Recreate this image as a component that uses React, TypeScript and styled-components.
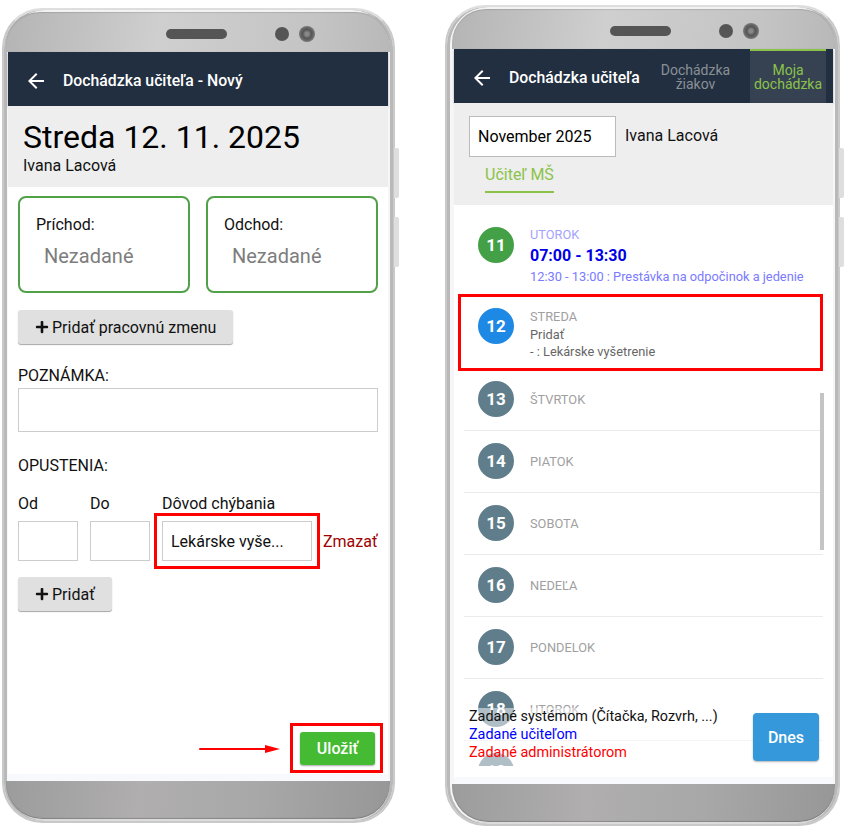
import styled, { createGlobalStyle } from "styled-components";
import { FaPlus } from "react-icons/fa";
import { MdArrowBack } from "react-icons/md";

const GlobalStyle = createGlobalStyle`
  html, body {
    margin: 0;
    padding: 0;
    background: #fff;
    font-family: Roboto, "Liberation Sans", sans-serif;
  }
  * { box-sizing: border-box; }
`;

const days = [
  { num: 13, name: "ŠTVRTOK" },
  { num: 14, name: "PIATOK" },
  { num: 15, name: "SOBOTA" },
  { num: 16, name: "NEDEĽA" },
  { num: 17, name: "PONDELOK" },
  { num: 18, name: "UTOROK" },
  { num: 19, name: "STREDA" },
];

const App = () => {
  return (
    <>
      <GlobalStyle />
      <Page>
        <Phone $width={393} $height={815} $top={8} $pad={4}>
          <SideKey $top={138} />
          <SideKey $top={207} />
          <TopBezel>
            <Speaker $offset={160} />
            <Sensor />
            <Camera />
          </TopBezel>
          <Screen>
            <Header>
              <BackIcon />
              <HeaderTitle>Dochádzka učiteľa - Nový</HeaderTitle>
            </Header>
            <DayHead>
              <DayTitle>Streda 12. 11. 2025</DayTitle>
              <DayPerson>Ivana Lacová</DayPerson>
            </DayHead>
            <Form>
              <TimeCards>
                <TimeCard>
                  <TimeLabel>Príchod:</TimeLabel>
                  <TimeValue>Nezadané</TimeValue>
                </TimeCard>
                <TimeCard>
                  <TimeLabel>Odchod:</TimeLabel>
                  <TimeValue>Nezadané</TimeValue>
                </TimeCard>
              </TimeCards>
              <GrayButton>
                <FaPlus size={14} />
                Pridať pracovnú zmenu
              </GrayButton>
              <SectionLabel>POZNÁMKA:</SectionLabel>
              <NoteBox />
              <AbsenceLabel>OPUSTENIA:</AbsenceLabel>
              <AbsenceGrid>
                <span>Od</span>
                <span>Do</span>
                <span>Dôvod chýbania</span>
                <span />
                <FieldBox />
                <FieldBox />
                <ReasonField>
                  Lekárske vyše...
                  <Highlight $left={-9} $top={-9} $width={166} $height={56} />
                </ReasonField>
                <DeleteLink>Zmazať</DeleteLink>
              </AbsenceGrid>
              <AddButton>
                <FaPlus size={14} />
                Pridať
              </AddButton>
              <SaveRow>
                <ArrowMark width="82" height="10" viewBox="0 0 82 10">
                  <path d="M1 5H68" stroke="#f00" strokeWidth="2" strokeLinecap="round" />
                  <path d="M66 1L81 5L66 9Z" fill="#f00" />
                </ArrowMark>
                <SaveButton>
                  Uložiť
                  <Highlight $left={-10} $top={-9} $width={93} $height={50} />
                </SaveButton>
              </SaveRow>
            </Form>
            <BottomBand />
          </Screen>
          <BottomBezel />
        </Phone>

        <Phone $width={395} $height={821} $top={5} $pad={7}>
          <SideKey $top={141} />
          <SideKey $top={210} />
          <TopBezel>
            <Speaker $offset={158} />
            <Sensor />
            <Camera />
          </TopBezel>
          <Screen>
            <Header>
              <BackIcon />
              <HeaderTitle>Dochádzka učiteľa</HeaderTitle>
              <Tabs>
                <Tab>Dochádzka žiakov</Tab>
                <Tab $active>Moja dochádzka</Tab>
              </Tabs>
            </Header>
            <MonthHead>
              <MonthRow>
                <MonthField>November 2025</MonthField>
                <MonthPerson>Ivana Lacová</MonthPerson>
              </MonthRow>
              <RoleTab>Učiteľ MŠ</RoleTab>
            </MonthHead>
            <ListArea>
              <DayRow $height={81} $plain>
                <DayCircle $color="#43a047">11</DayCircle>
                <DayInfo $top={0}>
                  <DayName $color="#a3a3ff">UTOROK</DayName>
                  <ShiftTime>07:00 - 13:30</ShiftTime>
                  <BreakText>12:30 - 13:00 : Prestávka na odpočinok a jedenie</BreakText>
                </DayInfo>
              </DayRow>
              <DayRow $height={73} $plain>
                <DayCircle $color="#1e88e5">12</DayCircle>
                <DayInfo $top={1}>
                  <DayName>STREDA</DayName>
                  <DayNote>Pridať</DayNote>
                  <DayNote>- : Lekárske vyšetrenie</DayNote>
                </DayInfo>
                <Highlight $left={-6} $top={-2} $width={365} $height={77} />
              </DayRow>
              {days.map((day) => (
                <DayRow key={day.num} $height={62}>
                  <DayCircle $color="#607d8b">{day.num}</DayCircle>
                  <DayInfo $top={11}>
                    <DayName>{day.name}</DayName>
                  </DayInfo>
                </DayRow>
              ))}
              <ScrollThumb />
              <LegendBar>
                <div>
                  <LegendItem $color="#111">Zadané systémom (Čítačka, Rozvrh, ...)</LegendItem>
                  <LegendItem $color="#0000ff">Zadané učiteľom</LegendItem>
                  <LegendItem $color="#ff0000">Zadané administrátorom</LegendItem>
                </div>
                <TodayButton>Dnes</TodayButton>
              </LegendBar>
            </ListArea>
            <ListFoot />
            <BottomBand />
          </Screen>
          <BottomBezel />
        </Phone>
      </Page>
    </>
  );
};

export default App;

const Page = styled.div`
  display: flex;
  align-items: flex-start;
  gap: 50px;
  width: 849px;
  height: 829px;
  padding-left: 2px;
  overflow: hidden;
`;

const Phone = styled.div<{ $width: number; $height: number; $top: number; $pad: number }>`
  position: relative;
  display: flex;
  flex-direction: column;
  width: ${(p) => p.$width}px;
  height: ${(p) => p.$height}px;
  margin-top: ${(p) => p.$top}px;
  padding: 0 5px 0 ${(p) => p.$pad}px;
  background: #f6f6f9;
  border: 2px solid #c9c9c9;
  border-top-color: #dedede;
  border-radius: 40px;
  box-shadow: inset 3px 0 0 #b9b9b9, inset -3px 0 0 #b9b9b9, inset 0 -2px 0 #dcdcdc, inset 0 2px 0 #f2f2f2;
`;

const SideKey = styled.div<{ $top: number }>`
  position: absolute;
  right: -6px;
  top: ${(p) => p.$top}px;
  width: 5px;
  height: 50px;
  background: #dedede;
  border-radius: 0 2px 2px 0;
`;

const TopBezel = styled.div`
  display: flex;
  flex: none;
  align-items: center;
  height: 40px;
  margin: 2px -2px 0;
  padding-top: 4px;
  background: linear-gradient(100deg, #b4b4b4, #cfcfcf 40%, #c4c4c4 80%, #b8b8b8);
  border-radius: 34px 34px 0 0;
  box-shadow: inset 0 1px 1px rgba(0, 0, 0, 0.12);
`;

const Speaker = styled.div<{ $offset: number }>`
  width: 61px;
  height: 10px;
  margin-left: ${(p) => p.$offset}px;
  background: #555;
  border-radius: 5px;
`;

const Sensor = styled.div`
  width: 14px;
  height: 14px;
  margin-left: 48px;
  background: #555;
  border-radius: 50%;
`;

const Camera = styled.div`
  width: 16px;
  height: 16px;
  margin-left: 10px;
  background: radial-gradient(circle, #888 15%, #555 40%, #777 70%);
  border-radius: 50%;
`;

const Screen = styled.div`
  display: flex;
  flex: 1;
  flex-direction: column;
  min-height: 0;
  background: #fff;
`;

const BottomBezel = styled.div`
  flex: none;
  height: 38px;
  margin: 0 -2px 2px;
  background: linear-gradient(95deg, #9c9c9c, #b0aeae 35%, #a8a8a8 65%, #989797);
  border-radius: 0 0 36px 36px;
  box-shadow: inset 0 -1px 1px rgba(0, 0, 0, 0.2);
`;

const BottomBand = styled.div`
  flex: none;
  height: 7px;
  background: #f8f9fd;
`;

const Header = styled.div`
  display: flex;
  flex: none;
  align-items: center;
  height: 54px;
  padding: 3px 0 0 16px;
  background: #222f40;
  box-shadow: 0 1px 2px rgba(0, 0, 0, 0.3);
`;

const BackIcon = styled(MdArrowBack)`
  flex: none;
  width: 24px;
  height: 24px;
  color: #fff;
`;

const HeaderTitle = styled.div`
  margin-left: 15px;
  color: #fff;
  font-size: 15.8px;
  font-weight: 500;
  white-space: nowrap;
`;

const Tabs = styled.div`
  display: flex;
  align-self: stretch;
  gap: 9px;
  margin: -3px 7px 0 auto;
`;

const Tab = styled.div<{ $active?: boolean }>`
  display: flex;
  align-items: center;
  justify-content: center;
  width: ${(p) => (p.$active ? "76px" : "91px")};
  padding: 0 8px;
  color: ${(p) => (p.$active ? "#8bc34a" : "#8a8f96")};
  background: ${(p) => (p.$active ? "#364252" : "transparent")};
  border-top: 2px solid ${(p) => (p.$active ? "#8bc34a" : "transparent")};
  font-size: 14px;
  line-height: 14px;
  text-align: center;
`;

const DayHead = styled.div`
  flex: none;
  height: 81px;
  padding: 14px 15px 0;
  background: #eee;
`;

const DayTitle = styled.div`
  color: #000;
  font-size: 32px;
  line-height: 34px;
`;

const Person = styled.div`
  color: #111;
  font-size: 16px;
  line-height: 19px;
`;

const DayPerson = styled(Person)`
  margin-top: 2px;
`;

const MonthPerson = styled(Person)`
  margin-bottom: 2px;
`;

const Form = styled.div`
  display: flex;
  flex: 1;
  flex-direction: column;
  align-items: flex-start;
  min-height: 0;
  padding: 9px 10px 9px;
  color: #111;
  font-size: 16px;
`;

const TimeCards = styled.div`
  display: grid;
  grid-template-columns: 172px 172px;
  gap: 16px;
`;

const TimeCard = styled.div`
  height: 97px;
  padding: 17px 16px;
  border: 2px solid #51a149;
  border-radius: 8px;
`;

const TimeLabel = styled.div`
  line-height: 19px;
`;

const TimeValue = styled.div`
  margin-top: 10px;
  padding-left: 8px;
  color: #7d7d7d;
  font-size: 20px;
  line-height: 24px;
`;

const GrayButton = styled.button`
  display: flex;
  flex: none;
  align-items: center;
  gap: 3px;
  height: 34px;
  margin-top: 17px;
  padding: 0 17px;
  color: #111;
  background: #e0e0e0;
  border: 0;
  border-radius: 3px;
  box-shadow: 0 1px 1px rgba(0, 0, 0, 0.35);
  font-family: inherit;
  font-size: 16px;
`;

const AddButton = styled(GrayButton)`
  margin-top: 16px;
`;

const SectionLabel = styled.div`
  margin-top: 22px;
  line-height: 19px;
`;

const NoteBox = styled.div`
  width: 360px;
  height: 44px;
  margin-top: 3px;
  border: 1px solid #ccc;
`;

const AbsenceLabel = styled(SectionLabel)`
  margin-top: 24px;
`;

const AbsenceGrid = styled.div`
  display: grid;
  grid-template-columns: 60px 60px 150px auto;
  column-gap: 12px;
  row-gap: 8px;
  align-items: center;
  margin-top: 19px;
`;

const FieldBox = styled.div`
  height: 40px;
  border: 1px solid #ccc;
`;

const ReasonField = styled(FieldBox)`
  position: relative;
  display: flex;
  align-items: center;
  padding-left: 8px;
`;

const DeleteLink = styled.span`
  margin-left: -1px;
  color: #a00000;
  white-space: nowrap;
`;

const SaveRow = styled.div`
  display: flex;
  align-items: center;
  align-self: stretch;
  justify-content: flex-end;
  margin-top: auto;
  padding-right: 3px;
`;

const ArrowMark = styled.svg`
  margin-right: 19px;
`;

const SaveButton = styled.button`
  position: relative;
  width: 75px;
  height: 33px;
  color: #fff;
  background: #45bb33;
  border: 0;
  border-radius: 3px;
  box-shadow: 0 1px 2px rgba(0, 0, 0, 0.35);
  font-family: inherit;
  font-size: 16px;
  font-weight: 500;
`;

const Highlight = styled.div<{ $left: number; $top: number; $width: number; $height: number }>`
  position: absolute;
  left: ${(p) => p.$left}px;
  top: ${(p) => p.$top}px;
  width: ${(p) => p.$width}px;
  height: ${(p) => p.$height}px;
  border: 3px solid #f00;
  pointer-events: none;
`;

const MonthHead = styled.div`
  flex: none;
  height: 102px;
  padding: 13px 15px 0;
  background: #eee;
`;

const MonthRow = styled.div`
  display: flex;
  align-items: center;
  gap: 9px;
`;

const MonthField = styled.div`
  display: flex;
  align-items: center;
  width: 147px;
  height: 41px;
  padding-left: 8px;
  color: #000;
  background: #fff;
  border: 1px solid #bbb;
  font-size: 16px;
`;

const RoleTab = styled.div`
  width: 69px;
  margin: 8px 0 0 16px;
  padding-bottom: 7px;
  color: #8bc34a;
  border-bottom: 2px solid #8bc34a;
  font-size: 16px;
  line-height: 19px;
  white-space: nowrap;
`;

const ListArea = styled.div`
  position: relative;
  flex: 1;
  min-height: 0;
  padding: 10px 10px 0;
  overflow: hidden;
`;

const ListFoot = styled.div`
  flex: none;
  height: 11px;
  background: #fff;
`;

const DayRow = styled.div<{ $height: number; $plain?: boolean }>`
  position: relative;
  display: flex;
  flex: none;
  height: ${(p) => p.$height}px;
  padding: 12px 0 0 14px;
  border-bottom: ${(p) => (p.$plain ? "0" : "1px solid #eaeaea")};
`;

const DayCircle = styled.div<{ $color: string }>`
  display: flex;
  flex: none;
  align-items: center;
  justify-content: center;
  width: 36px;
  height: 36px;
  color: #fff;
  background: ${(p) => p.$color};
  border-radius: 50%;
  font-size: 17px;
  font-weight: 700;
`;

const DayInfo = styled.div<{ $top: number }>`
  margin-left: 16px;
  padding-top: ${(p) => p.$top}px;
`;

const DayName = styled.div<{ $color?: string }>`
  color: ${(p) => p.$color ?? "#a0a0a0"};
  font-size: 12.8px;
  line-height: 15px;
`;

const ShiftTime = styled.div`
  margin-top: 4px;
  color: #0000e6;
  font-size: 16px;
  font-weight: 700;
  line-height: 20px;
`;

const BreakText = styled.div`
  margin-top: 2px;
  color: #7a7aff;
  font-size: 12.8px;
  line-height: 17px;
  white-space: nowrap;
`;

const DayNote = styled.div`
  margin-top: 3px;
  color: #666;
  font-size: 12.8px;
  line-height: 16px;

  & + & {
    margin-top: 1px;
  }
`;

const ScrollThumb = styled.div`
  position: absolute;
  right: 9px;
  top: 188px;
  width: 4px;
  height: 157px;
  background: #c4c4c4;
`;

const LegendBar = styled.div`
  position: absolute;
  left: 0;
  right: 0;
  bottom: 0;
  display: flex;
  align-items: flex-start;
  justify-content: space-between;
  height: 58px;
  padding: 0 14px 0 15px;
  background: rgba(255, 255, 255, 0.5);
`;

const LegendItem = styled.div<{ $color: string }>`
  color: ${(p) => p.$color};
  font-size: 14.4px;
  line-height: 18px;
  white-space: nowrap;
`;

const TodayButton = styled.button`
  width: 66px;
  height: 48px;
  margin-top: 5px;
  color: #fff;
  background: #3498db;
  border: 0;
  border-radius: 4px;
  box-shadow: 0 1px 2px rgba(0, 0, 0, 0.3);
  font-family: inherit;
  font-size: 16px;
  font-weight: 500;
`;
